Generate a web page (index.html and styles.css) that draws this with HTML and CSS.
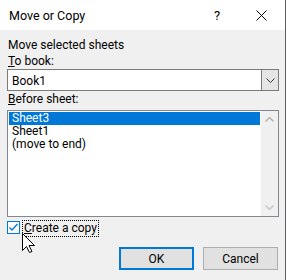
FILE: index.html
```html
<!DOCTYPE html>
<html>
<head>
<meta charset="utf-8">
<link rel="stylesheet" href="styles.css">
</head>
<body>
<div class="dialog">
  <div class="titlebar">
    <span class="title">Move or Copy</span>
    <span class="help">?</span>
    <span class="close"><svg width="11" height="11" viewBox="0 0 11 11"><path d="M0.5 0.5 L10.5 10.5 M10.5 0.5 L0.5 10.5" stroke="#000" stroke-width="1" fill="none"/></svg></span>
  </div>
  <div class="content">
    <div class="label">Move selected sheets</div>
    <div class="label"><u>T</u>o book:</div>
    <div class="combo">
      <span class="combo-text">Book1</span>
      <span class="drop"><svg width="9" height="5" viewBox="0 0 9 5"><path d="M0.5 0.5 L4.5 4.5 L8.5 0.5" stroke="#333" stroke-width="1" fill="none"/></svg></span>
    </div>
    <div class="label"><u>B</u>efore sheet:</div>
    <div class="list">
      <div class="items">
        <div class="item sel">Sheet3</div>
        <div class="item">Sheet1</div>
        <div class="item">(move to end)</div>
      </div>
      <div class="scroll">
        <svg class="arr" width="9" height="5" viewBox="0 0 9 5"><path d="M0.5 4.5 L4.5 0.5 L8.5 4.5" stroke="#b4b4b4" stroke-width="1.5" fill="none"/></svg>
        <svg class="arr" width="9" height="5" viewBox="0 0 9 5"><path d="M0.5 0.5 L4.5 4.5 L8.5 0.5" stroke="#c8c8c8" stroke-width="1.5" fill="none"/></svg>
      </div>
    </div>
    <div class="check">
      <span class="box"><svg width="11" height="11" viewBox="0 0 11 11"><path d="M1.5 5.5 L4 8 L9.5 2" stroke="#0078d7" stroke-width="1.3" fill="none"/></svg></span>
      <span class="focus"><u>C</u>reate a copy</span>
    </div>
    <div class="buttons">
      <button class="btn ok">OK</button>
      <button class="btn">Cancel</button>
    </div>
  </div>
  <svg class="cursor" width="13" height="21" viewBox="0 0 13 21"><path d="M0.5 0.5 L0.5 17.5 L4.5 13.5 L7.5 19.5 L10 18.5 L7 12.5 L12.5 12.5 Z" fill="#fff" stroke="#000" stroke-width="1" stroke-linejoin="miter"/></svg>
</div>
</body>
</html>
```
FILE: styles.css
```css
html, body {
  margin: 0;
  padding: 0;
}
body {
  width: 288px;
  height: 280px;
  background: #ffffff;
  font-family: Roboto, "Liberation Sans", Arial, sans-serif;
  font-size: 12px;
  color: #000;
  overflow: hidden;
}
.dialog {
  position: relative;
  width: 285px;
  height: 280px;
  border-right: 1px solid #5f5f5f;
  background: #f0f0f0;
  display: flex;
  flex-direction: column;
}
.titlebar {
  height: 30px;
  background: #fff;
  display: flex;
  align-items: center;
  flex-shrink: 0;
}
.title {
  margin-left: 9px;
  font-size: 12.5px;
  flex: 1;
  padding-top: 1px;
}
.help {
  font-size: 13px;
  width: 10px;
  margin-right: 32px;
  padding-top: 1px;
}
.close {
  display: flex;
  margin-right: 18px;
}
.content {
  padding: 7px 7px 0 7px;
  display: flex;
  flex-direction: column;
}
.label {
  line-height: 16px;
  height: 16px;
  padding-left: 1px;
}
.combo {
  width: 272px;
  height: 22px;
  box-sizing: border-box;
  border: 1px solid #7a7a7a;
  background: #fff;
  display: flex;
}
.combo-text {
  flex: 1;
  line-height: 20px;
  padding-left: 4px;
  padding-top: 1px;
}
.drop {
  width: 16px;
  background: #e5e5e5;
  border-left: 1px solid #7a7a7a;
  display: flex;
  align-items: center;
  justify-content: center;
}
.list {
  margin-top: 3px;
  width: 272px;
  height: 107px;
  box-sizing: border-box;
  border: 1px solid #828790;
  background: #fff;
  display: flex;
}
.items {
  flex: 1;
  padding: 1px;
}
.item {
  line-height: 13px;
  height: 13px;
  padding-left: 3px;
}
.item.sel {
  background: #0078d7;
  color: #fff;
}
.scroll {
  width: 17px;
  background: #f0f0f0;
  display: flex;
  flex-direction: column;
  justify-content: space-between;
  align-items: center;
  padding: 6px 0 6px 0;
}
.check {
  margin-top: 4px;
  height: 16px;
  display: flex;
  align-items: flex-start;
}
.box {
  width: 13px;
  height: 13px;
  box-sizing: border-box;
  border: 1px solid #0078d7;
  background: #fff;
  display: flex;
  align-items: center;
  justify-content: center;
}
.focus {
  margin-left: 3px;
  outline: 1px dotted #000;
  outline-offset: 0;
  padding: 0 1px;
  line-height: 15px;
  height: 15px;
}
.buttons {
  margin-top: 10px;
  display: flex;
  justify-content: flex-end;
  gap: 9px;
}
.btn {
  width: 75px;
  height: 23px;
  box-sizing: border-box;
  border: 1px solid #adadad;
  background: #e1e1e1;
  font-family: Roboto, "Liberation Sans", Arial, sans-serif;
  font-size: 12px;
  color: #000;
  padding: 0;
  margin: 0;
}
.btn.ok {
  border: 2px solid #0078d7;
}
.cursor {
  position: absolute;
  left: 22px;
  top: 233px;
}
```
